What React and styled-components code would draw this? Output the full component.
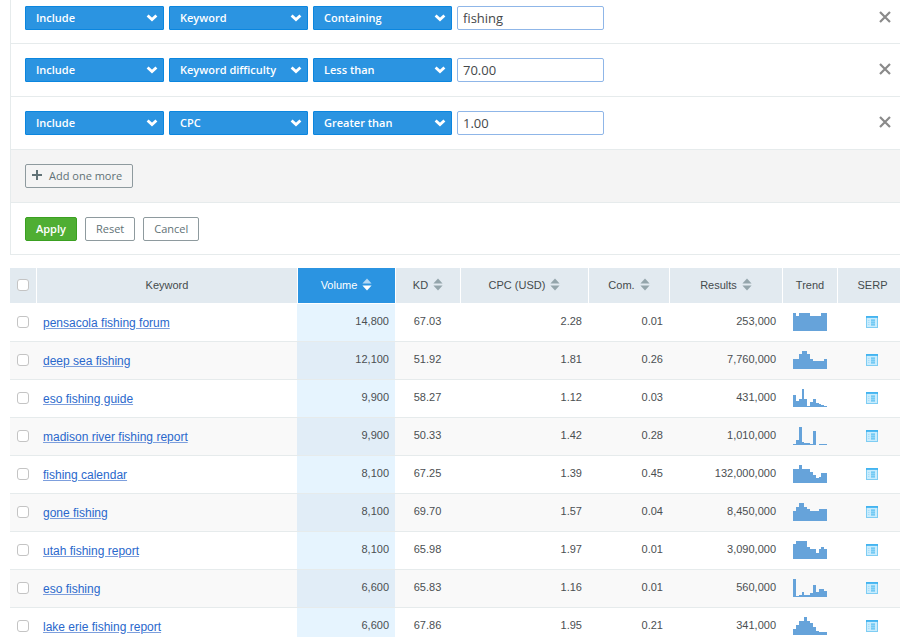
import React from 'react';
import styled, { createGlobalStyle } from 'styled-components';

const GlobalStyle = createGlobalStyle`
  *, *::before, *::after { box-sizing: border-box; }
  body {
    margin: 0;
    background: #fff;
    color: #4b4f52;
    font-family: "Liberation Sans", Arial, sans-serif;
    font-size: 11px;
    overflow: hidden;
  }
  button, input, select { font-family: "Open Sans", "Noto Sans", sans-serif; }
`;

const Page = styled.main`
  padding-left: 10px;
`;

const Panel = styled.form`
  border-left: 1px solid #e6ebec;
  margin-bottom: 13px;
`;

const FilterRow = styled.div`
  display: flex;
  align-items: center;
  gap: 5px;
  padding: 14px 9px 14px 14px;
  border-bottom: 1px solid #e6ebec;

  &:first-child { padding-top: 6px; padding-bottom: 13px; }
`;

const AddRow = styled.div`
  display: flex;
  padding: 14px;
  background: #f4f4f4;
  border-bottom: 1px solid #e6ebec;
`;

const ActionRow = styled.div`
  display: flex;
  gap: 8px;
  padding: 14px 14px 13px;
  border-bottom: 1px solid #e6ebec;
`;

const SelectBox = styled.span`
  display: grid;
  grid-template-columns: 1fr 18px;
  align-items: center;
  width: 139px;

  > select { grid-area: 1 / 1 / 2 / 3; }
  > svg { grid-area: 1 / 2; pointer-events: none; }
`;

const Select = styled.select`
  appearance: none;
  height: 24px;
  padding: 0 20px 2px 10px;
  border: 1px solid #0b86df;
  border-radius: 1px;
  background: #2b94e1;
  color: #fff;
  font-size: 11px;
  font-weight: 600;
`;

const TextInput = styled.input`
  width: 147px;
  height: 24px;
  padding: 0 5px 1px;
  border: 1px solid #8fb6e8;
  border-radius: 2px;
  background: #fff;
  color: #44484a;
  font-size: 13px;
`;

const RemoveButton = styled.button`
  display: flex;
  margin-left: auto;
  padding: 0 0 2px;
  border: 0;
  background: none;
  color: #8a8a8a;
`;

const Button = styled.button`
  display: flex;
  align-items: center;
  gap: 7px;
  height: 24px;
  padding: 0 10px 2px ${(p) => (p.$icon ? '6px' : '10px')};
  border: 1px solid ${(p) => (p.$primary ? '#3aa021' : '#8e9a9e')};
  border-radius: 2px;
  background: ${(p) => (p.$primary ? '#4fae33' : p.$icon ? 'transparent' : '#fff')};
  color: ${(p) => (p.$primary ? '#fff' : '#617276')};
  font-size: 11px;
  font-weight: ${(p) => (p.$primary ? 600 : 500)};
`;

const Table = styled.table`
  width: 100%;
  table-layout: fixed;
  border-collapse: separate;
  border-spacing: 0;
`;

const Col = styled.col`
  width: ${(p) => (p.$width ? `${p.$width}px` : 'auto')};
`;

const HeadCell = styled.th`
  height: 36px;
  padding: 0 0 2px ${(p) => p.$indent || 0}px;
  border-bottom: 1px solid #fff;
  border-left: ${(p) => (p.$first ? '0' : '1px solid #fff')};
  background: ${(p) => (p.$active ? '#2b94e1' : '#e2eaf0')};
  background-clip: padding-box;
  color: ${(p) => (p.$active ? '#fff' : '#454a4d')};
  font-weight: 400;
  text-align: center;
`;

const SortButton = styled.button`
  display: inline-flex;
  align-items: center;
  gap: 5px;
  padding: 0;
  border: 0;
  background: none;
  color: inherit;
  font-family: inherit;
  font-size: 11px;
`;

const Row = styled.tr`
  background: ${(p) => (p.$striped ? '#f9f9f9' : '#fff')};
`;

const Cell = styled.td`
  height: 38px;
  padding: 0 6px 3px 0;
  border-bottom: 1px solid #e6ebec;
  text-align: right;
`;

const VolumeCell = styled(Cell)`
  background: ${(p) => (p.$striped ? '#e1edf7' : '#e6f4fe')};
`;

const CenterCell = styled(Cell)`
  padding: 0 0 3px;
  text-align: center;
`;

const LinkCell = styled(Cell)`
  padding: 0 0 0 7px;
  font-size: 12px;
  text-align: left;
`;

const IconCell = styled(Cell)`
  padding: 0 0 2px ${(p) => p.$indent || 0}px;
  text-align: center;
`;

const KeywordLink = styled.a`
  color: #2a68cc;
  text-decoration: underline;
  text-decoration-color: #7d9fdd;
`;

const Checkbox = styled.input`
  appearance: none;
  display: block;
  width: 12px;
  height: 12px;
  margin: 0 auto;
  border: 1px solid #c4c4c4;
  border-radius: 3px;
  background: #fff;
`;

const Drawing = styled.svg`
  display: block;
  margin: 0 auto;
`;

function Chevron() {
  return (
    <svg width="12" height="10" viewBox="0 0 12 10" aria-hidden="true">
      <path d="M1.6 2.4L6 6.6l4.4-4.2" fill="none" stroke="#fff" strokeWidth="2.8" />
    </svg>
  );
}

function SortIcon({ active }) {
  return (
    <svg width="10" height="13" viewBox="0 0 10 13" aria-hidden="true">
      <path d="M5 0.5L9.6 5.5H0.4z" fill={active ? '#b3d8f5' : '#94a5ab'} />
      <path d="M5 12.5L9.6 7.5H0.4z" fill={active ? '#fff' : '#94a5ab'} />
    </svg>
  );
}

function Trend({ values, label }) {
  return (
    <Drawing width="34" height="19" viewBox="0 0 120 57" preserveAspectRatio="none" role="img" aria-label={label}>
      <g fill="#66a3da" shapeRendering="crispEdges">
        {values.map((v, i) => (
          <rect key={i} x={i * 10} y={57 - v} width="10" height={v} />
        ))}
      </g>
    </Drawing>
  );
}

function SerpIcon() {
  return (
    <Drawing width="12" height="12" viewBox="0 0 12 12" aria-hidden="true">
      <rect x="0.5" y="0.5" width="11" height="11" fill="#c9ecfd" stroke="#7fcdf3" />
      <path d="M0 1h12" stroke="#35aeef" strokeWidth="1.6" />
      <path d="M2 4.5h1.5M2 6.5h1.5M2 8.5h1.5" stroke="#a8def9" />
      <path d="M5 3h4v7H5z" fill="#8fd5f7" />
      <path d="M5 4.5h4M5 6.5h4M5 8.5h4" stroke="#74caf4" />
    </Drawing>
  );
}

function Filter({ field, condition, value }) {
  const selects = [
    ['Mode', 'Include'],
    ['Field', field],
    ['Condition', condition],
  ];
  return (
    <FilterRow>
      {selects.map(([name, text]) => (
        <SelectBox key={name}>
          <Select aria-label={name} defaultValue={text}>
            <option>{text}</option>
          </Select>
          <Chevron />
        </SelectBox>
      ))}
      <TextInput aria-label="Value" defaultValue={value} />
      <RemoveButton type="button" aria-label="Remove filter">
        <svg width="12" height="12" viewBox="0 0 12 12" aria-hidden="true">
          <path d="M1 1l10 10M11 1L1 11" stroke="currentColor" strokeWidth="2.2" />
        </svg>
      </RemoveButton>
    </FilterRow>
  );
}

const filters = [
  { field: 'Keyword', condition: 'Containing', value: 'fishing' },
  { field: 'Keyword difficulty', condition: 'Less than', value: '70.00' },
  { field: 'CPC', condition: 'Greater than', value: '1.00' },
];

const columns = [26, 0, 98, 65, 128, 81, 113, 55, 63];

const rows = [
  ['pensacola fishing forum', '14,800', '67.03', '2.28', '0.01', '253,000', [55, 45, 55, 55, 55, 55, 45, 45, 45, 45, 55, 55]],
  ['deep sea fishing', '12,100', '51.92', '1.81', '0.26', '7,760,000', [30, 30, 44, 55, 55, 44, 30, 25, 25, 25, 25, 30]],
  ['eso fishing guide', '9,900', '58.27', '1.12', '0.03', '431,000', [35, 19, 24, 55, 24, 4, 16, 25, 11, 8, 6, 2]],
  ['madison river fishing report', '9,900', '50.33', '1.42', '0.28', '1,010,000', [2, 15, 54, 9, 7, 6, 3, 42, 0, 2, 2, 4]],
  ['fishing calendar', '8,100', '67.25', '1.39', '0.45', '132,000,000', [43, 43, 54, 43, 43, 43, 34, 24, 14, 18, 29, 29]],
  ['gone fishing', '8,100', '69.70', '1.57', '0.04', '8,450,000', [30, 43, 55, 55, 43, 36, 30, 30, 30, 35, 35, 35]],
  ['utah fishing report', '8,100', '65.98', '1.97', '0.01', '3,090,000', [44, 55, 55, 55, 55, 35, 29, 29, 19, 29, 35, 29]],
  ['eso fishing', '6,600', '65.83', '1.16', '0.01', '560,000', [55, 2, 6, 16, 7, 7, 11, 36, 16, 24, 24, 19]],
  ['lake erie fishing report', '6,600', '67.86', '1.95', '0.21', '341,000', [19, 30, 43, 43, 55, 43, 35, 23, 13, 10, 10, 10]],
];

function SortHead({ children, active }) {
  return (
    <HeadCell scope="col" $active={active}>
      <SortButton type="button">
        {children}
        <SortIcon active={active} />
      </SortButton>
    </HeadCell>
  );
}

export default function App() {
  return (
    <Page>
      <GlobalStyle />
      <Panel onSubmit={(e) => e.preventDefault()}>
        {filters.map((f) => (
          <Filter key={f.field} {...f} />
        ))}
        <AddRow>
          <Button type="button" $icon>
            <svg width="10" height="10" viewBox="0 0 10 10" aria-hidden="true">
              <path d="M5 0v10M0 5h10" stroke="currentColor" strokeWidth="2" />
            </svg>
            Add one more
          </Button>
        </AddRow>
        <ActionRow>
          <Button type="submit" $primary>Apply</Button>
          <Button type="reset">Reset</Button>
          <Button type="button">Cancel</Button>
        </ActionRow>
      </Panel>
      <Table>
        <colgroup>
          {columns.map((w, i) => (
            <Col key={i} $width={w} />
          ))}
        </colgroup>
        <thead>
          <tr>
            <HeadCell scope="col" $first>
              <Checkbox type="checkbox" aria-label="Select all keywords" />
            </HeadCell>
            <HeadCell scope="col">Keyword</HeadCell>
            <SortHead active>Volume</SortHead>
            <SortHead>KD</SortHead>
            <SortHead>CPC (USD)</SortHead>
            <SortHead>Com.</SortHead>
            <SortHead>Results</SortHead>
            <HeadCell scope="col">Trend</HeadCell>
            <HeadCell scope="col" $indent={7}>SERP</HeadCell>
          </tr>
        </thead>
        <tbody>
          {rows.map(([keyword, volume, kd, cpc, com, results, trend], i) => {
            const striped = i % 2 === 1;
            return (
              <Row key={keyword} $striped={striped}>
                <IconCell>
                  <Checkbox type="checkbox" aria-label={`Select ${keyword}`} />
                </IconCell>
                <LinkCell>
                  <KeywordLink href="#">{keyword}</KeywordLink>
                </LinkCell>
                <VolumeCell $striped={striped}>{volume}</VolumeCell>
                <CenterCell>{kd}</CenterCell>
                <Cell>{cpc}</Cell>
                <Cell>{com}</Cell>
                <Cell>{results}</Cell>
                <IconCell>
                  <Trend values={trend} label={`Trend for ${keyword}`} />
                </IconCell>
                <IconCell $indent={7}>
                  <SerpIcon />
                </IconCell>
              </Row>
            );
          })}
        </tbody>
      </Table>
    </Page>
  );
}
